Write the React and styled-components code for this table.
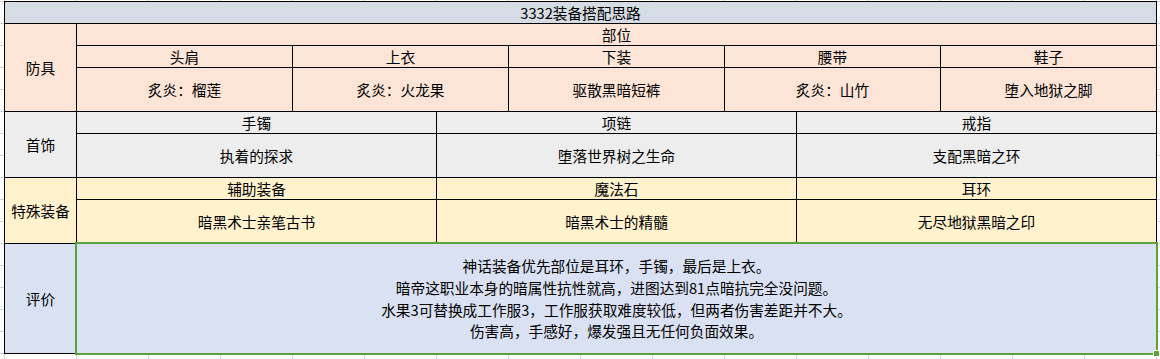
import React from 'react'
import styled, { createGlobalStyle } from 'styled-components'

const GlobalStyle = createGlobalStyle`
  html, body {
    margin: 0;
    padding: 0;
    background: #fff;
  }
  body {
    font-family: "Noto Sans CJK SC", "Microsoft YaHei", sans-serif;
    color: #000;
  }
`

const colors = {
  title: '#d6dce4',
  armor: '#fce4d6',
  jewel: '#ededed',
  special: '#fff2cc',
  review: '#d9e1f2',
}

const armor = [
  { part: '头肩', item: '炙炎：榴莲' },
  { part: '上衣', item: '炙炎：火龙果' },
  { part: '下装', item: '驱散黑暗短裤' },
  { part: '腰带', item: '炙炎：山竹' },
  { part: '鞋子', item: '堕入地狱之脚' },
]

const jewels = [
  { part: '手镯', item: '执着的探求' },
  { part: '项链', item: '堕落世界树之生命' },
  { part: '戒指', item: '支配黑暗之环' },
]

const specials = [
  { part: '辅助装备', item: '暗黑术士亲笔古书' },
  { part: '魔法石', item: '暗黑术士的精髓' },
  { part: '耳环', item: '无尽地狱黑暗之印' },
]

const review = [
  '神话装备优先部位是耳环，手镯，最后是上衣。',
  '暗帝这职业本身的暗属性抗性就高，进图达到81点暗抗完全没问题。',
  '水果3可替换成工作服3，工作服获取难度较低，但两者伤害差距并不大。',
  '伤害高，手感好，爆发强且无任何负面效果。',
]

const App = () => {
  return (
    <Sheet>
      <GlobalStyle />
      <Table>
        <Cell $col={0} $span={16} $row={0} $bg={colors.title}>3332装备搭配思路</Cell>

        <Cell $col={0} $row={1} $rows={4} $bg={colors.armor}>防具</Cell>
        <Cell $col={1} $span={15} $row={1} $bg={colors.armor}>部位</Cell>
        {armor.map((a, i) => (
          <React.Fragment key={a.part}>
            <Cell $col={1 + i * 3} $span={3} $row={2} $bg={colors.armor}>{a.part}</Cell>
            <Cell $col={1 + i * 3} $span={3} $row={3} $rows={2} $bg={colors.armor}>{a.item}</Cell>
          </React.Fragment>
        ))}

        <Cell $col={0} $row={5} $rows={3} $bg={colors.jewel}>首饰</Cell>
        {jewels.map((j, i) => (
          <React.Fragment key={j.part}>
            <Cell $col={1 + i * 5} $span={5} $row={5} $bg={colors.jewel}>{j.part}</Cell>
            <Cell $col={1 + i * 5} $span={5} $row={6} $rows={2} $bg={colors.jewel}>{j.item}</Cell>
          </React.Fragment>
        ))}

        <Cell $col={0} $row={8} $rows={3} $bg={colors.special}>特殊装备</Cell>
        {specials.map((s, i) => (
          <React.Fragment key={s.part}>
            <Cell $col={1 + i * 5} $span={5} $row={8} $bg={colors.special}>{s.part}</Cell>
            <Cell $col={1 + i * 5} $span={5} $row={9} $rows={2} $bg={colors.special}>{s.item}</Cell>
          </React.Fragment>
        ))}

        <Cell $col={0} $row={11} $rows={5} $bg={colors.review}>评价</Cell>
        <ReviewCell $col={1} $span={15} $row={11} $rows={5} $bg={colors.review}>
          {review.map((line) => (
            <div key={line}>{line}</div>
          ))}
          <Selection>
            <FillHandle />
          </Selection>
        </ReviewCell>
      </Table>
    </Sheet>
  )
}

const Sheet = styled.div`
  width: 1160px;
  height: 359px;
  box-sizing: border-box;
  padding: 1px 0 0 4px;
  overflow: hidden;
  background-color: #fff;
  background-image:
    linear-gradient(to right, #d4d4d4 1px, transparent 1px),
    linear-gradient(to bottom, #d4d4d4 1px, transparent 1px);
  background-size: 72px 100%, 100% 22px;
  background-position: 4px 0, 0 1px;
`

const Table = styled.div`
  display: grid;
  grid-template-columns: repeat(16, 71px);
  grid-template-rows: repeat(16, 21px);
  gap: 1px;
  padding: 1px;
  width: max-content;
  background: #000;
`

const Cell = styled.div`
  grid-column: ${(p) => p.$col + 1} / span ${(p) => p.$span || 1};
  grid-row: ${(p) => p.$row + 1} / span ${(p) => p.$rows || 1};
  background: ${(p) => p.$bg};
  display: flex;
  align-items: center;
  justify-content: center;
  font-size: 14.67px;
  line-height: 21px;
  white-space: nowrap;
`

const ReviewCell = styled(Cell)`
  position: relative;
  flex-direction: column;
  line-height: 21.7px;
  text-align: center;
`

const Selection = styled.div`
  position: absolute;
  inset: -2px;
  border: 2px solid #5ea13a;
  pointer-events: none;
`

const FillHandle = styled.div`
  position: absolute;
  right: -3px;
  bottom: -3px;
  width: 5px;
  height: 5px;
  background: #5ea13a;
  box-shadow: 0 0 0 1px #fff;
`

export default App
